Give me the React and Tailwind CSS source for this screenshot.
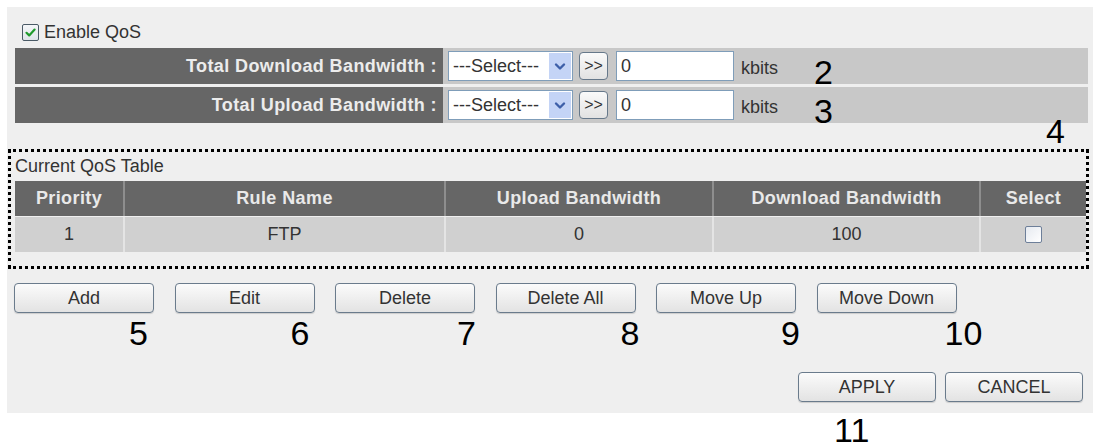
import React from "react";

const FONT = "font-['Liberation_Sans',Arial,sans-serif]";

function CheckBox({ checked }) {
  return (
    <span className="flex h-[17px] w-[17px] items-center justify-center rounded-[2px] border border-[#4a5a66] bg-gradient-to-b from-[#f4f6f8] to-[#dfe4ea]">
      {checked ? (
        <svg width="13" height="13" viewBox="0 0 13 13">
          <path
            d="M2.5 6.8 L5.2 9.4 L10.6 3.6"
            fill="none"
            stroke="#1f9a2c"
            strokeWidth="2.2"
            strokeLinecap="round"
            strokeLinejoin="round"
          />
        </svg>
      ) : null}
    </span>
  );
}

function SelectBox() {
  return (
    <div className="flex h-[30px] w-[125px] items-center border border-[#7f9db9] bg-white">
      <span className="flex-1 pl-[4px] text-[18px] leading-none text-[#333]">
        ---Select---
      </span>
      <span className="mr-[1px] flex h-[26px] w-[22px] items-center justify-center bg-[#c4d4f6]">
        <svg width="12" height="9" viewBox="0 0 12 9">
          <path
            d="M2 2.5 L6 6.5 L10 2.5"
            fill="none"
            stroke="#3d5fa8"
            strokeWidth="2.4"
            strokeLinecap="round"
            strokeLinejoin="round"
          />
        </svg>
      </span>
    </div>
  );
}

function BandwidthRow({ label, mark }) {
  return (
    <div className="flex h-[36px]">
      <div className="flex w-[428px] items-center justify-end bg-[#666666] pr-[6px] text-[18px] font-bold tracking-[0.4px] text-[#ececec]">
        {label}
      </div>
      <div className="flex flex-1 items-center bg-[#c8c8c8] pl-[5px]">
        <SelectBox />
        <span className="ml-[6px] flex h-[28px] w-[29px] items-center justify-center rounded-[4px] border border-[#66788a] bg-gradient-to-b from-[#fafafa] to-[#e2e2e2] text-[16px] leading-none text-[#333]">
          &gt;&gt;
        </span>
        <div className="ml-[8px] flex h-[30px] w-[118px] items-center border border-[#7f9db9] bg-white pl-[4px] text-[18px] text-[#333]">
          0
        </div>
        <span className="ml-[7px] mt-[4px] w-[73px] text-[18px] text-[#333]">kbits</span>
        <span className="-mb-[5px] self-end text-[34px] leading-none text-black">{mark}</span>
      </div>
    </div>
  );
}

function Btn({ children, w = "w-[140px]" }) {
  return (
    <button
      className={`${w} h-[30px] rounded-[4px] border border-[#6a7b8c] bg-gradient-to-b from-[#fbfbfb] to-[#e3e3e3] text-[18px] leading-none text-[#333] shadow-[0_1px_1px_rgba(0,0,0,0.15)]`}
    >
      {children}
    </button>
  );
}

const buttons = [
  { label: "Add", mark: "5", ml: "ml-[115px]" },
  { label: "Edit", mark: "6", ml: "ml-[116px]" },
  { label: "Delete", mark: "7", ml: "ml-[122px]" },
  { label: "Delete All", mark: "8", ml: "ml-[125px]" },
  { label: "Move Up", mark: "9", ml: "ml-[125px]" },
  { label: "Move Down", mark: "10", ml: "ml-[128px]" },
];

const cols = ["Priority", "Rule Name", "Upload Bandwidth", "Download Bandwidth", "Select"];

export default function App() {
  return (
    <div className={`${FONT} h-[448px] w-[1093px] overflow-hidden bg-white pt-[7px]`}>
      <div className="ml-[7px] flex h-[406px] flex-col bg-[#efefef]">
        <div className="mt-[9px] flex h-[32px] items-center pl-[15px]">
          <CheckBox checked />
          <span className="ml-[5px] text-[18px] text-[#333]">Enable QoS</span>
        </div>

        <div className="ml-[8px] mr-[5px] flex flex-col gap-[3px]">
          <BandwidthRow label="Total Download Bandwidth :" mark="2" />
          <BandwidthRow label="Total Upload Bandwidth :" mark="3" />
        </div>

        <div className="flex h-[26px] justify-end pr-[28px]">
          <span className="-mt-[9px] text-[34px] leading-none text-black">4</span>
        </div>

        <div className="ml-[1px] mr-[4px] border-[3px] border-dotted border-black pb-[14px] pl-[4px]">
          <div className="flex h-[29px] items-center text-[18px] text-[#333]">
            Current QoS Table
          </div>
          <div className="flex flex-col gap-[1px]">
            <div className="grid h-[35px] grid-cols-[108px_321px_268px_267px_107px] bg-[#666666] text-[18px] font-bold tracking-[0.4px] text-[#e9e9e9]">
              {cols.map((c, i) => (
                <div
                  key={c}
                  className={`flex items-center justify-center ${i > 0 ? "border-l-2 border-[#8e8e8e]" : ""}`}
                >
                  {c}
                </div>
              ))}
            </div>
            <div className="grid h-[35px] grid-cols-[108px_321px_268px_267px_107px] bg-[#d0d0d0] text-[18px] text-[#333]">
              <div className="flex items-center justify-center">1</div>
              <div className="flex items-center justify-center border-l-2 border-[#e4e4e4]">FTP</div>
              <div className="flex items-center justify-center border-l-2 border-[#e4e4e4]">0</div>
              <div className="flex items-center justify-center border-l-2 border-[#e4e4e4]">100</div>
              <div className="flex items-center justify-center border-l-2 border-[#e4e4e4]">
                <span className="h-[17px] w-[17px] rounded-[2px] border border-[#6d7f99] bg-gradient-to-br from-[#e6eaf0] to-white" />
              </div>
            </div>
          </div>
        </div>

        <div className="mt-[14px] flex gap-[20.5px] pl-[7px]">
          {buttons.map((b) => (
            <div key={b.label} className="flex w-[140px] flex-col">
              <Btn>{b.label}</Btn>
              <span className={`${b.ml} mt-[3px] whitespace-nowrap text-[34px] leading-none text-black`}>
                {b.mark}
              </span>
            </div>
          ))}
        </div>

        <div className="mt-[22px] flex justify-end gap-[9px] pr-[10px]">
          <Btn w="w-[138px]">APPLY</Btn>
          <Btn w="w-[138px]">CANCEL</Btn>
        </div>
      </div>
      <div className="ml-[834px] text-[34px] leading-none text-black">11</div>
    </div>
  );
}
